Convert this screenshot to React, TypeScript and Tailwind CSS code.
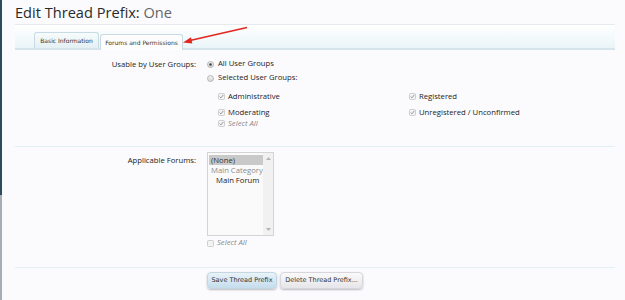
const Radio = ({ checked }: { checked?: boolean }) => (
  <svg width="7" height="7" viewBox="0 0 7 7" className="shrink-0">
    <defs>
      <linearGradient id="rg" x1="0" y1="0" x2="0" y2="1">
        <stop offset="0" stopColor="#f4f4f4" />
        <stop offset="1" stopColor="#d6d6d6" />
      </linearGradient>
    </defs>
    <circle cx="3.5" cy="3.5" r="3" fill="url(#rg)" stroke="#a9a9a9" strokeWidth="0.8" />
    {checked && <circle cx="3.5" cy="3.5" r="1.3" fill="#444" />}
  </svg>
);

const Check = ({ checked }: { checked?: boolean }) => (
  <svg width="7" height="7" viewBox="0 0 7 7" className="shrink-0">
    <rect x="0.5" y="0.5" width="6" height="6" rx="1" fill="#f3f3f3" stroke="#c4c4c4" strokeWidth="0.8" />
    {checked && <path d="M1.6 3.6 L2.9 4.9 L5.4 1.8" fill="none" stroke="#9a9a9a" strokeWidth="1" />}
  </svg>
);

const CheckRow = ({ label, italic, checked = true }: { label: string; italic?: boolean; checked?: boolean }) => (
  <div className="flex items-center gap-[3px]">
    <Check checked={checked} />
    <span className={italic ? "italic text-[#8a8a8a]" : "text-[#222]"}>{label}</span>
  </div>
);

export default function App() {
  return (
    <div className="flex w-[625px] h-[300px] overflow-hidden bg-[#fbfbfd] font-['Open_Sans',sans-serif] text-[7.7px] text-[#222]">
      <div className="flex flex-col w-[2px] shrink-0">
        <div className="h-[195px] bg-[#2e4c61]" />
        <div className="flex-1 bg-[#a7adb3]" />
      </div>

      <div className="relative flex-1 pl-[13px] pr-[10px]">
        <h1 className="h-[24px] pt-[1px] text-[14.6px] leading-[22px] text-[#2a2a2a]">
          Edit Thread Prefix: <span className="text-[#666]">One</span>
        </h1>

        <div className="flex items-end h-[26px] pl-[19px] gap-[1px] border-t border-[#e6eaee] border-b-2 border-b-[#d6e5eb] bg-gradient-to-b from-[#ffffff] to-[#eaf5f8] font-['DejaVu_Sans',sans-serif] text-[6px] text-[#333]">
          <div className="flex items-center justify-center w-[65px] h-[16px] border border-b-0 border-[#c9dbe2] rounded-t-[3px] bg-gradient-to-b from-[#f7fbfc] to-[#e4f0f4]">
            Basic Information
          </div>
          <div className="flex items-center justify-center w-[83px] h-[16px] -mb-[2px] border border-b-0 border-[#c9dbe2] rounded-t-[3px] bg-[#fdfdfe]">
            Forums and Permissions
          </div>
        </div>

        <div className="flex h-[97px] pt-[7px] border-b border-[#e2eff3]">
          <div className="w-[181px] text-right leading-[14px]">Usable by User Groups:</div>
          <div className="flex flex-col pl-[11px]">
            <div className="flex items-center gap-[4px] h-[14px]">
              <Radio checked />
              <span>All User Groups</span>
            </div>
            <div className="flex items-center gap-[4px] h-[14px]">
              <Radio />
              <span>Selected User Groups:</span>
            </div>
            <div className="grid grid-cols-[191px_auto] pl-[11px] pt-[4px]">
              <div className="flex flex-col">
                <div className="h-[16px] flex items-center"><CheckRow label="Administrative" /></div>
                <div className="h-[16px] flex items-center"><CheckRow label="Moderating" /></div>
                <div className="h-[11px] -mt-[3px] flex items-center"><CheckRow label="Select All" italic /></div>
              </div>
              <div className="flex flex-col">
                <div className="h-[16px] flex items-center"><CheckRow label="Registered" /></div>
                <div className="h-[16px] flex items-center"><CheckRow label="Unregistered / Unconfirmed" /></div>
              </div>
            </div>
          </div>
        </div>

        <div className="flex h-[121px] pt-[5px] border-b border-[#e2eff3]">
          <div className="w-[181px] text-right leading-[12px] pt-[2px]">Applicable Forums:</div>
          <div className="flex flex-col pl-[11px]">
            <div className="flex w-[67px] h-[84px] border border-[#d4d4d4] bg-[#fafafa]">
              <div className="flex-1 flex flex-col pt-[2px] pl-[1px] leading-[10px]">
                <div className="bg-[#c9c9c9] pl-[2px] text-[#333]">(None)</div>
                <div className="pl-[2px] text-[#8c8c8c]">Main Category</div>
                <div className="pl-[7px] text-[#222]">Main Forum</div>
              </div>
              <div className="flex flex-col justify-between items-center w-[10px] py-[4px] bg-[#f1f1f1]">
                <svg width="5" height="3" viewBox="0 0 5 3"><path d="M0 3 L2.5 0 L5 3Z" fill="#b5b5b5" /></svg>
                <svg width="5" height="3" viewBox="0 0 5 3"><path d="M0 0 L2.5 3 L5 0Z" fill="#b5b5b5" /></svg>
              </div>
            </div>
            <div className="flex items-center gap-[3px] h-[12px] mt-[1px]">
              <Check />
              <span className="italic text-[#8a8a8a]">Select All</span>
            </div>
          </div>
        </div>

        <div className="flex gap-[3px] pl-[192px] pt-[4px] font-['DejaVu_Sans',sans-serif] text-[6.5px] text-[#333]">
          <button className="w-[70px] h-[17px] rounded-[4px] border border-[#c3d6e2] bg-gradient-to-b from-[#e9f3f9] to-[#c5dcec] shadow-[0_1px_2px_rgba(0,0,0,0.25)]">
            Save Thread Prefix
          </button>
          <button className="w-[83px] h-[17px] rounded-[4px] border border-[#d6d6dc] bg-gradient-to-b from-[#fafafa] to-[#e6e6ea] shadow-[0_1px_2px_rgba(0,0,0,0.25)]">
            Delete Thread Prefix...
          </button>
        </div>

        <svg className="absolute left-0 top-0 pointer-events-none" width="623" height="60" viewBox="0 0 623 60">
          <line x1="245" y1="27.5" x2="188" y2="40.5" stroke="#e3261f" strokeWidth="1.6" />
          <path d="M181 42.5 L189 37.3 L190.3 43.6 Z" fill="#e3261f" />
        </svg>
      </div>
    </div>
  );
}
